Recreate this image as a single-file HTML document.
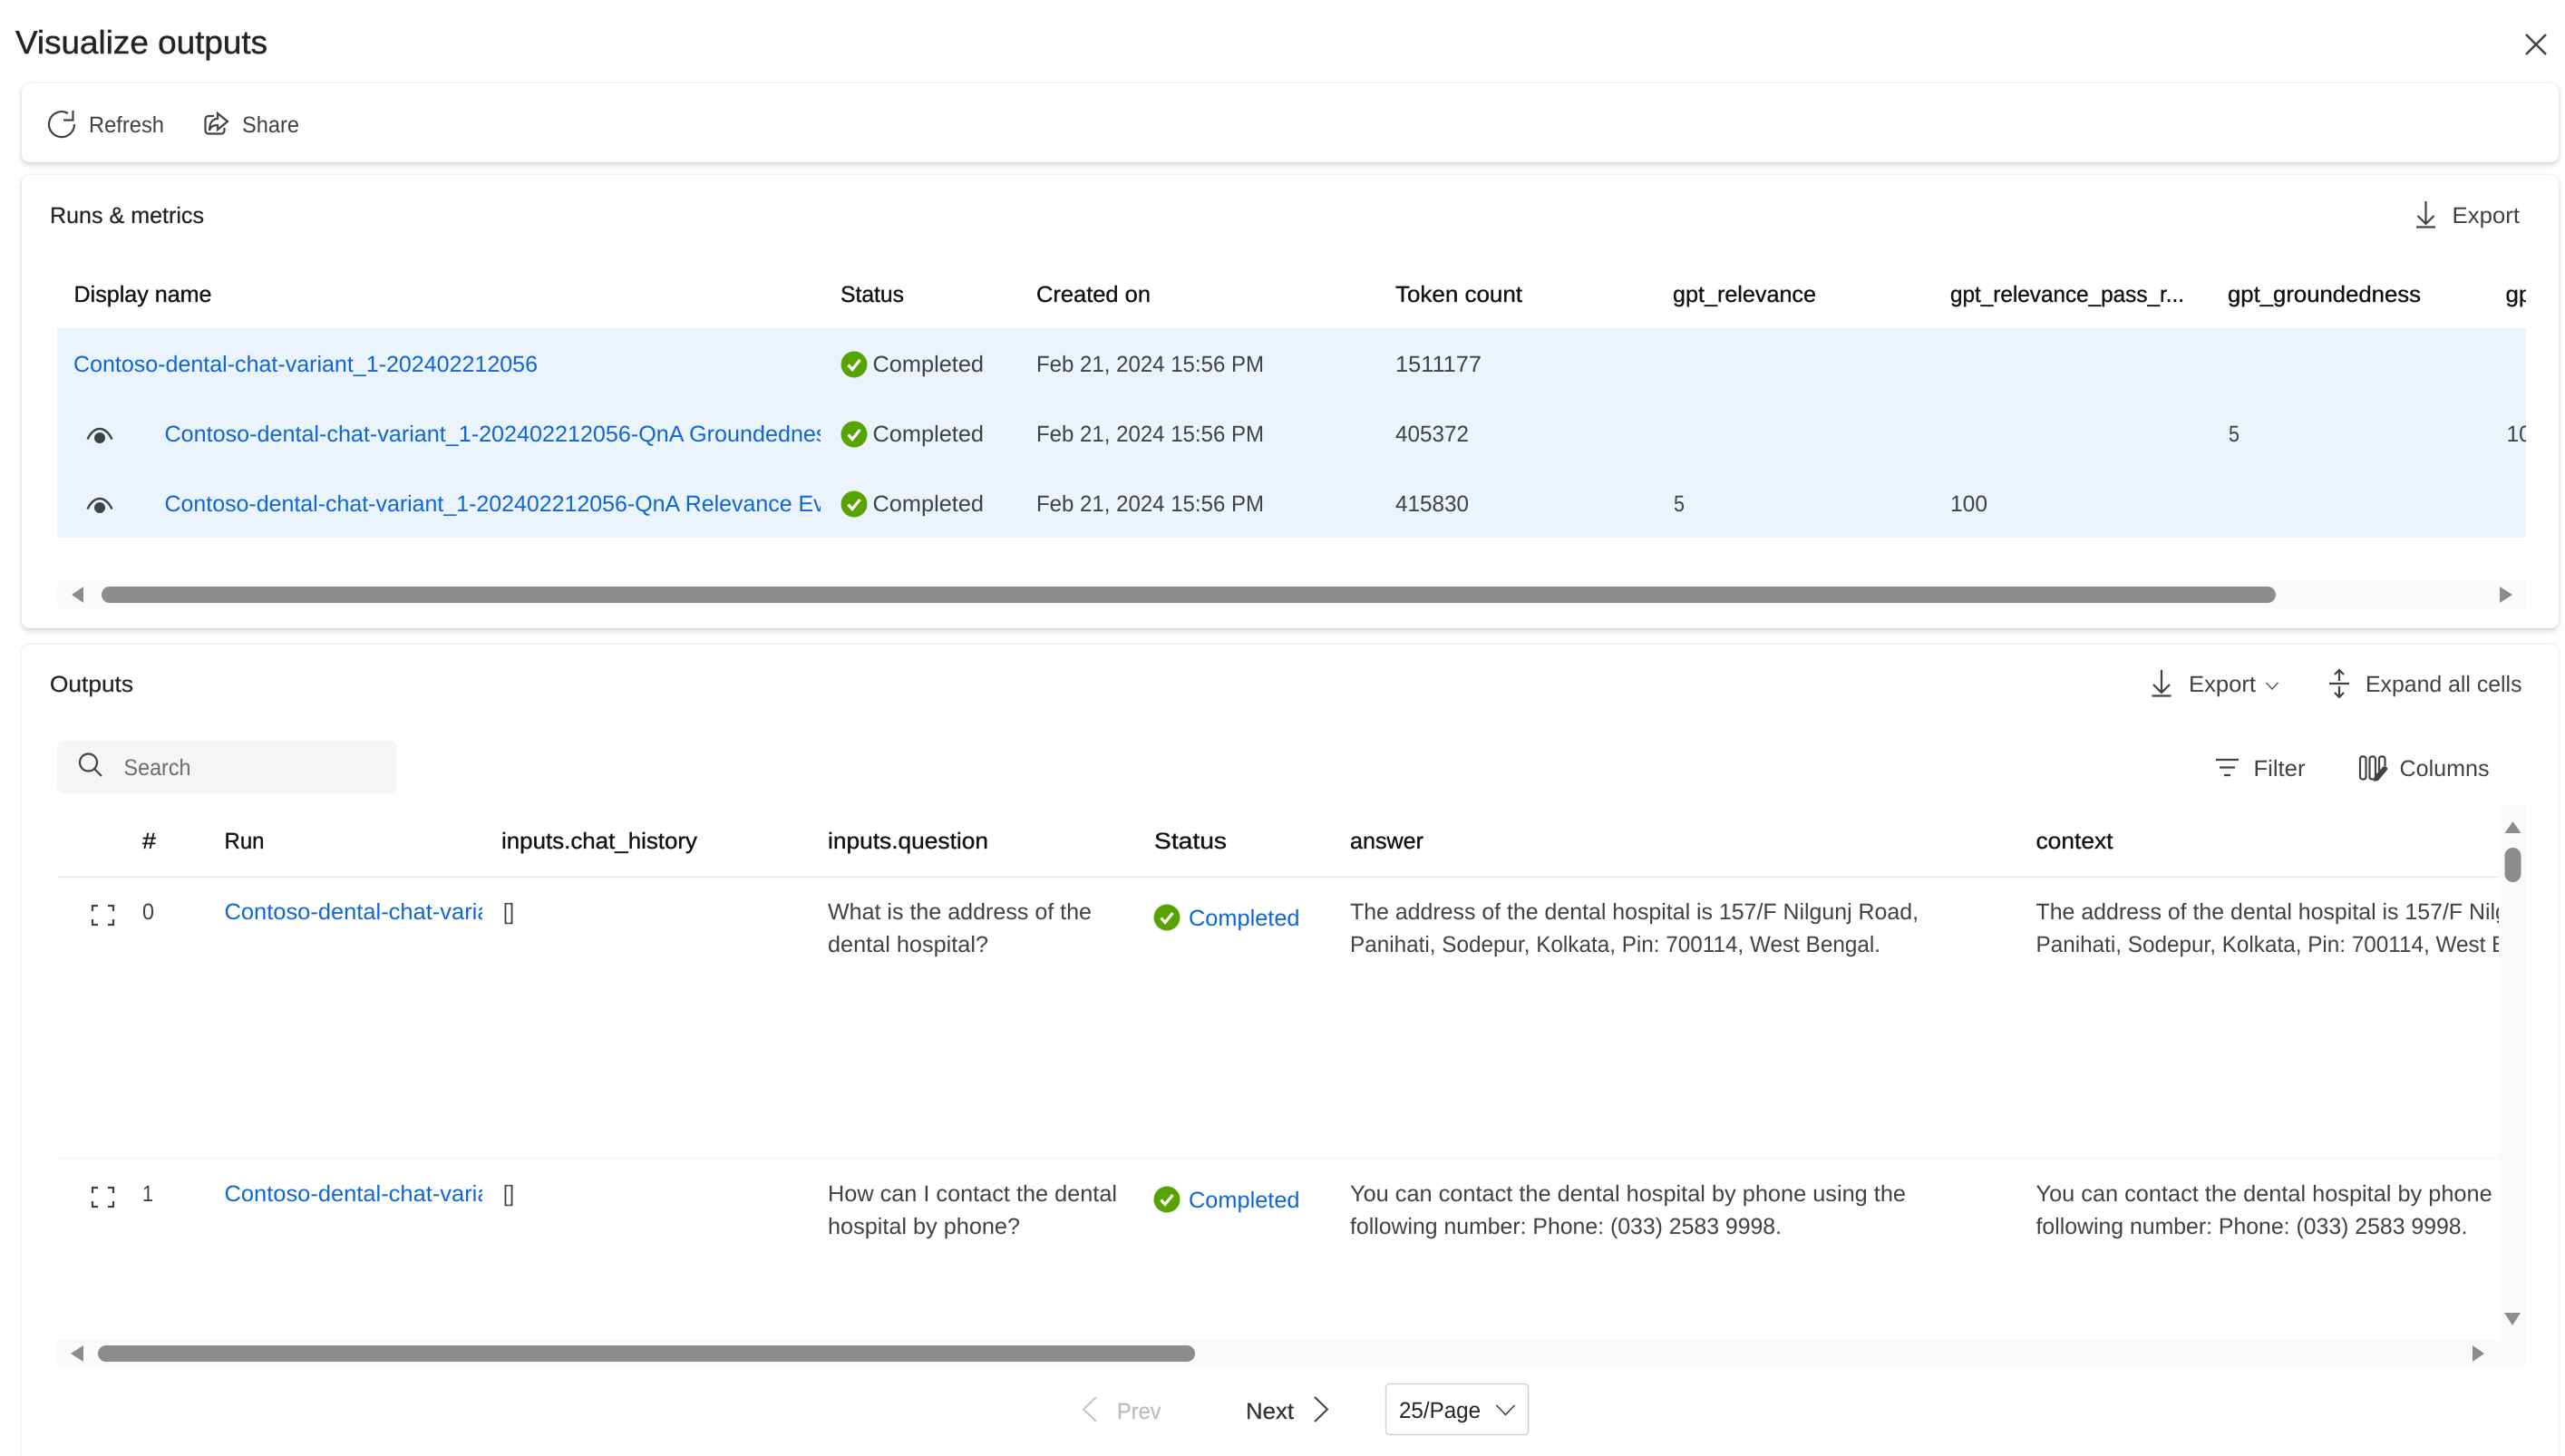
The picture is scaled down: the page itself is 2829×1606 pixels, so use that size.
<!DOCTYPE html>
<html lang="en">
<head>
<meta charset="utf-8">
<title>Visualize outputs</title>
<style>
html,body{margin:0;padding:0;width:2829px;height:1606px;background:#fff;overflow:hidden}
#w{position:absolute;left:0;top:0;width:2829px;height:1606px;overflow:hidden;background:#fff}
.card{position:absolute;left:24px;width:2798px;background:#fff;border-radius:9px;box-shadow:0 3px 7px rgba(0,0,0,.16),0 0 3px rgba(0,0,0,.08)}
svg{position:absolute;left:0;top:0;display:block}
text{font-family:"Liberation Sans",sans-serif;font-size:25px;fill:#424242;text-rendering:geometricPrecision}
.h{fill:#111;stroke:#111;stroke-width:.35}
.l{fill:#0f66d6}
.k{fill:#242424;stroke:#242424;stroke-width:.25}
.i{fill:none;stroke:#424242;stroke-width:2.2}
.a{fill:#8c8c8c}
</style>
</head>
<body>
<div id="w">
<div class="card" style="top:92px;height:87px"></div>
<div class="card" style="top:193px;height:500px"></div>
<div class="card" style="top:711px;height:885px;border-radius:9px 9px 0 0;box-shadow:0 0 3px rgba(0,0,0,.1),0 -1px 3px rgba(0,0,0,.04);height:900px"></div>
<svg width="2829" height="1606" viewBox="0 0 2829 1606" xmlns="http://www.w3.org/2000/svg">
<defs>
<g id="ok"><circle r="14.5" fill="#57a300"/><path d="M-6.5 0.5 L-2 5.5 L6.5 -5" fill="none" stroke="#fff" stroke-width="3.2"/></g>
<g id="eye"><path d="M-13.5 3.5 C-10 -4 -5 -8 0 -8 C5 -8 10 -4 13.5 3.5" fill="none" stroke="#424242" stroke-width="2.4"/><circle cx="0" cy="2" r="6" fill="#424242"/></g>
<g id="exp" fill="none" stroke="#424242" stroke-width="2.2"><path d="M102 1005 V999 H108 M119 999 H125 V1005 M125 1014 V1020 H119 M108 1020 H102 V1014"/></g>
<clipPath id="c1"><rect x="63" y="363" width="2723" height="230"/></clipPath>
<clipPath id="c2"><rect x="182" y="440" width="723" height="150"/></clipPath>
<clipPath id="c3"><rect x="247" y="980" width="285" height="400"/></clipPath>
<clipPath id="c4"><rect x="2245" y="980" width="511" height="400"/></clipPath>
<clipPath id="c5"><rect x="63" y="300" width="2723" height="300"/></clipPath>
</defs>

<!-- Title -->
<text x="17" y="59" style="font-size:36px;fill:#242424;stroke:#242424;stroke-width:.45" textLength="278" lengthAdjust="spacingAndGlyphs">Visualize outputs</text>
<path d="M2786 38 L2808 60 M2808 38 L2786 60" fill="none" stroke="#424242" stroke-width="2.4"/>

<!-- Toolbar -->
<path class="i" d="M75 125 A14 14 0 1 0 82 137"/>
<path class="i" d="M80.5 122 V132.5 H70"/>
<text x="98" y="146" textLength="83" lengthAdjust="spacingAndGlyphs">Refresh</text>
<path class="i" d="M236 128 H230 a3.5 3.5 0 0 0 -3.5 3.5 V144 a3.5 3.5 0 0 0 3.5 3.5 H244 a3.5 3.5 0 0 0 3.5 -3.5 V141"/>
<path class="i" d="M240 125 L251 134 L240 143 V138 C235 138 232 140 231 144 C231 136 234 131 240 131 Z"/>
<text x="267" y="146" textLength="63" lengthAdjust="spacingAndGlyphs">Share</text>

<!-- Runs & metrics -->
<text class="k" x="55" y="246" textLength="170" lengthAdjust="spacingAndGlyphs">Runs &amp; metrics</text>
<path class="i" d="M2675.5 222 V247 M2666.5 238 L2675.5 247 L2684.5 238 M2665 250.5 H2686"/>
<text x="2704.5" y="246" textLength="74.5" lengthAdjust="spacingAndGlyphs">Export</text>

<rect x="63" y="363" width="2723" height="230" fill="#ebf3fc"/>
<path d="M63 362.5 H2786" stroke="#ececec" stroke-width="1"/>
<path d="M63 439.5 H2786 M63 516.5 H2786" stroke="#f2f5f9" stroke-width="1"/>

<g clip-path="url(#c5)">
<text class="h" x="81.5" y="333" textLength="152" lengthAdjust="spacingAndGlyphs">Display name</text>
<text class="h" x="927" y="333" textLength="70" lengthAdjust="spacingAndGlyphs">Status</text>
<text class="h" x="1143" y="333" textLength="126" lengthAdjust="spacingAndGlyphs">Created on</text>
<text class="h" x="1539" y="333" textLength="140" lengthAdjust="spacingAndGlyphs">Token count</text>
<text class="h" x="1845" y="333" textLength="158" lengthAdjust="spacingAndGlyphs">gpt_relevance</text>
<text class="h" x="2151" y="333" textLength="258" lengthAdjust="spacingAndGlyphs">gpt_relevance_pass_r...</text>
<text class="h" x="2457" y="333" textLength="213" lengthAdjust="spacingAndGlyphs">gpt_groundedness</text>
<text class="h" x="2763.5" y="333" textLength="36" lengthAdjust="spacingAndGlyphs">gpt</text>
</g>

<text class="l" x="81" y="410" textLength="512" lengthAdjust="spacingAndGlyphs">Contoso-dental-chat-variant_1-202402212056</text>
<g clip-path="url(#c2)">
<text class="l" x="181.5" y="487" textLength="731" lengthAdjust="spacingAndGlyphs">Contoso-dental-chat-variant_1-202402212056-QnA Groundednes</text>
<text class="l" x="181.5" y="564" textLength="742" lengthAdjust="spacingAndGlyphs">Contoso-dental-chat-variant_1-202402212056-QnA Relevance Eva</text>
</g>
<use href="#eye" x="110" y="481"/>
<use href="#eye" x="110" y="558"/>

<use href="#ok" x="942" y="402"/>
<use href="#ok" x="942" y="479"/>
<use href="#ok" x="942" y="556"/>
<text x="962.5" y="410" textLength="122.5" lengthAdjust="spacingAndGlyphs">Completed</text>
<text x="962.5" y="487" textLength="122.5" lengthAdjust="spacingAndGlyphs">Completed</text>
<text x="962.5" y="564" textLength="122.5" lengthAdjust="spacingAndGlyphs">Completed</text>
<text x="1143" y="410" textLength="251" lengthAdjust="spacingAndGlyphs">Feb 21, 2024 15:56 PM</text>
<text x="1143" y="487" textLength="251" lengthAdjust="spacingAndGlyphs">Feb 21, 2024 15:56 PM</text>
<text x="1143" y="564" textLength="251" lengthAdjust="spacingAndGlyphs">Feb 21, 2024 15:56 PM</text>
<text x="1539" y="410" textLength="95" lengthAdjust="spacingAndGlyphs">1511177</text>
<text x="1539" y="487" textLength="81" lengthAdjust="spacingAndGlyphs">405372</text>
<text x="1539" y="564" textLength="81" lengthAdjust="spacingAndGlyphs">415830</text>
<text x="2458" y="487" textLength="12" lengthAdjust="spacingAndGlyphs">5</text>
<g clip-path="url(#c1)"><text x="2764.5" y="487" textLength="41" lengthAdjust="spacingAndGlyphs">100</text></g>
<text x="1846" y="564" textLength="12" lengthAdjust="spacingAndGlyphs">5</text>
<text x="2151" y="564" textLength="41" lengthAdjust="spacingAndGlyphs">100</text>

<!-- Scrollbar 1 -->
<rect x="63" y="641" width="2723" height="30" fill="#fafafa"/>
<rect x="112" y="647" width="2398" height="18" rx="9" class="a"/>
<path class="a" d="M79 656 L92 647 V665 Z"/>
<path class="a" d="M2757 647 L2771 656 L2757 665 Z"/>

<!-- Outputs -->
<text class="k" x="55" y="763" textLength="92" lengthAdjust="spacingAndGlyphs">Outputs</text>
<path class="i" d="M2384 739 V764 M2375 755 L2384 764 L2393 755 M2373.5 767.5 H2394.5"/>
<text x="2414" y="763" textLength="74" lengthAdjust="spacingAndGlyphs">Export</text>
<path d="M2499.5 753 L2506 760 L2512.5 753" fill="none" stroke="#616161" stroke-width="1.6"/>
<path class="i" d="M2580 739 V751 M2575 744 L2580 739 L2585 744 M2569 754 H2591 M2580 757 V769 M2575 764 L2580 769 L2585 764"/>
<text x="2609" y="763" textLength="172.5" lengthAdjust="spacingAndGlyphs">Expand all cells</text>

<rect x="63" y="817" width="375" height="58" rx="7" fill="#f5f5f5"/>
<circle cx="97.5" cy="841" r="9.5" class="i"/>
<path class="i" d="M104 848 L112 856"/>
<text x="136.5" y="855" style="fill:#6e6e6e" textLength="74" lengthAdjust="spacingAndGlyphs">Search</text>

<path class="i" d="M2444 838 H2469 M2448 846.5 H2465 M2453 855 H2460"/>
<text x="2485.5" y="856" textLength="57" lengthAdjust="spacingAndGlyphs">Filter</text>
<path class="i" d="M2603 837 a2.5 2.5 0 0 1 2.5 -2.5 h1.5 a2.5 2.5 0 0 1 2.5 2.5 V857 a2.5 2.5 0 0 1 -2.5 2.5 h-1.5 a2.5 2.5 0 0 1 -2.5 -2.5 Z M2613.5 837 a2.5 2.5 0 0 1 2.5 -2.5 h1.5 a2.5 2.5 0 0 1 2.5 2.5 V857 a2.5 2.5 0 0 1 -2.5 2.5 h-1.5 a2.5 2.5 0 0 1 -2.5 -2.5 Z M2624 851 V837 a2.5 2.5 0 0 1 2.5 -2.5 h1.5 a2.5 2.5 0 0 1 2.5 2.5 V845"/>
<path d="M2620 855 L2628 846 C2630 844 2634 846 2633 849 L2623 861 L2618 862 Z" fill="#424242"/>
<text x="2646.5" y="856" textLength="99" lengthAdjust="spacingAndGlyphs">Columns</text>

<!-- Outputs table header -->
<text class="h" x="157" y="936" textLength="15" lengthAdjust="spacingAndGlyphs">#</text>
<text class="h" x="247.5" y="936" textLength="44" lengthAdjust="spacingAndGlyphs">Run</text>
<text class="h" x="553" y="936" textLength="216" lengthAdjust="spacingAndGlyphs">inputs.chat_history</text>
<text class="h" x="913" y="936" textLength="177" lengthAdjust="spacingAndGlyphs">inputs.question</text>
<text class="h" x="1273" y="936" textLength="80" lengthAdjust="spacingAndGlyphs">Status</text>
<text class="h" x="1489" y="936" textLength="81" lengthAdjust="spacingAndGlyphs">answer</text>
<text class="h" x="2245.5" y="936" textLength="85" lengthAdjust="spacingAndGlyphs">context</text>
<path d="M63 967.5 H2756" stroke="#e8e8e8" stroke-width="1.5"/>
<path d="M63 1277.5 H2756" stroke="#f5f5f5" stroke-width="1.5"/>

<!-- Vertical scrollbar -->
<rect x="2756" y="889" width="30" height="589" fill="#fafafa"/>
<path class="a" d="M2771.5 906 L2780.5 919 H2762.5 Z"/>
<rect x="2762.5" y="935" width="18" height="38" rx="9" class="a"/>
<path class="a" d="M2762 1448 H2780 L2771 1462 Z"/>

<!-- Row 0 -->
<use href="#exp"/>
<text x="157" y="1014" textLength="13" lengthAdjust="spacingAndGlyphs">0</text>
<g clip-path="url(#c3)"><text class="l" x="247.5" y="1014" textLength="293" lengthAdjust="spacingAndGlyphs">Contoso-dental-chat-varia</text></g>
<text x="555" y="1014" textLength="12" lengthAdjust="spacingAndGlyphs">[]</text>
<text x="913" y="1014" textLength="291" lengthAdjust="spacingAndGlyphs">What is the address of the</text>
<text x="913" y="1050" textLength="177" lengthAdjust="spacingAndGlyphs">dental hospital?</text>
<use href="#ok" x="1287" y="1012"/>
<text class="l" x="1311" y="1021" textLength="122.5" lengthAdjust="spacingAndGlyphs">Completed</text>
<text x="1489" y="1014" textLength="627" lengthAdjust="spacingAndGlyphs">The address of the dental hospital is 157/F Nilgunj Road,</text>
<text x="1489" y="1050" textLength="585" lengthAdjust="spacingAndGlyphs">Panihati, Sodepur, Kolkata, Pin: 700114, West Bengal.</text>
<g clip-path="url(#c4)">
<text x="2245.5" y="1014" textLength="627" lengthAdjust="spacingAndGlyphs">The address of the dental hospital is 157/F Nilgunj Road,</text>
<text x="2245.5" y="1050" textLength="585" lengthAdjust="spacingAndGlyphs">Panihati, Sodepur, Kolkata, Pin: 700114, West Bengal.</text>
</g>

<!-- Row 1 -->
<use href="#exp" y="311"/>
<text x="157" y="1325" textLength="12" lengthAdjust="spacingAndGlyphs">1</text>
<g clip-path="url(#c3)"><text class="l" x="247.5" y="1325" textLength="293" lengthAdjust="spacingAndGlyphs">Contoso-dental-chat-varia</text></g>
<text x="555" y="1325" textLength="12" lengthAdjust="spacingAndGlyphs">[]</text>
<text x="913" y="1325" textLength="319" lengthAdjust="spacingAndGlyphs">How can I contact the dental</text>
<text x="913" y="1361" textLength="212" lengthAdjust="spacingAndGlyphs">hospital by phone?</text>
<use href="#ok" x="1287" y="1323"/>
<text class="l" x="1311" y="1332" textLength="122.5" lengthAdjust="spacingAndGlyphs">Completed</text>
<text x="1489" y="1325" textLength="613" lengthAdjust="spacingAndGlyphs">You can contact the dental hospital by phone using the</text>
<text x="1489" y="1361" textLength="476" lengthAdjust="spacingAndGlyphs">following number: Phone: (033) 2583 9998.</text>
<g clip-path="url(#c4)">
<text x="2245.5" y="1325" textLength="613" lengthAdjust="spacingAndGlyphs">You can contact the dental hospital by phone using the</text>
<text x="2245.5" y="1361" textLength="476" lengthAdjust="spacingAndGlyphs">following number: Phone: (033) 2583 9998.</text>
</g>

<!-- Scrollbar 2 -->
<rect x="63" y="1478" width="2723" height="30" fill="#fafafa"/>
<rect x="108" y="1484" width="1210" height="18" rx="9" class="a"/>
<path class="a" d="M78 1493 L92 1484 V1502 Z"/>
<path class="a" d="M2727 1484 L2740 1493 L2727 1502 Z"/>

<!-- Pagination -->
<path d="M1209 1541 L1195 1554.5 L1209 1568" fill="none" stroke="#c4c4c4" stroke-width="2"/>
<text x="1232" y="1565" style="fill:#bdbdbd;stroke:#bdbdbd;stroke-width:.3" textLength="48.5" lengthAdjust="spacingAndGlyphs">Prev</text>
<text x="1374" y="1565" style="fill:#333;stroke:#333;stroke-width:.3" textLength="53" lengthAdjust="spacingAndGlyphs">Next</text>
<path d="M1450 1541 L1464 1554.5 L1450 1568" fill="none" stroke="#424242" stroke-width="2"/>
<rect x="1528.5" y="1526.5" width="157" height="56" rx="4" fill="#fff" stroke="#d1d1d1" stroke-width="1.5"/>
<text x="1543" y="1564" style="fill:#242424" textLength="90" lengthAdjust="spacingAndGlyphs">25/Page</text>
<path d="M1650.5 1550 L1660.5 1560.5 L1670.5 1550" fill="none" stroke="#424242" stroke-width="1.6"/>
</svg>
</div>
</body>
</html>
